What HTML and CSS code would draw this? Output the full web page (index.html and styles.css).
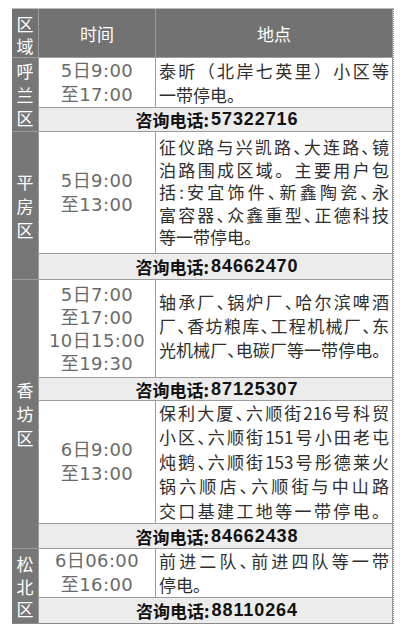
FILE: index.html
```
<!DOCTYPE html>
<html lang="zh">
<head>
<meta charset="utf-8">
<link rel="stylesheet" href="styles.css">
</head>
<body>
<div class="tbl">
  <div class="hd reg"><span>区</span><span>域</span></div>
  <div class="hd">时间</div>
  <div class="hd">地点</div>

  <div class="reg r1"><span>呼</span><span>兰</span><span>区</span></div>
  <div class="tm"><div>5日9:00</div><div>至17:00</div></div>
  <div class="loc lh24">
    <div class="j">泰昕（北岸七英里）小区等</div>
    <div>一带停电。</div>
  </div>
  <div class="ph">咨询电话:<span class="num">57322716</span></div>

  <div class="reg r2"><span>平</span><span>房</span><span>区</span></div>
  <div class="tm"><div>5日9:00</div><div>至13:00</div></div>
  <div class="loc lh22">
    <div class="j">征仪路与兴凯路<span class="d">、</span>大连路<span class="d">、</span>镜</div>
    <div class="j">泊路围成区域。主要用户包</div>
    <div class="j">括:安宜饰件<span class="d">、</span>新鑫陶瓷<span class="d">、</span>永</div>
    <div class="j">富容器<span class="d">、</span>众鑫重型<span class="d">、</span>正德科技</div>
    <div>等一带停电。</div>
  </div>
  <div class="ph">咨询电话:<span class="num">84662470</span></div>

  <div class="reg r3"><span>香</span><span>坊</span><span>区</span></div>
  <div class="tm lh23"><div>5日7:00</div><div>至17:00</div><div>10日15:00</div><div>至19:30</div></div>
  <div class="loc lh24 up">
    <div class="j">轴承厂<span class="d">、</span>锅炉厂<span class="d">、</span>哈尔滨啤酒</div>
    <div class="j">厂<span class="d">、</span>香坊粮库<span class="d">、</span>工程机械厂<span class="d">、</span>东</div>
    <div class="j tight">光机械厂<span class="d">、</span>电碳厂等一带停电。</div>
  </div>
  <div class="ph">咨询电话:<span class="num">87125307</span></div>
  <div class="tm"><div>6日9:00</div><div>至13:00</div></div>
  <div class="loc lh245">
    <div class="j">保利大厦<span class="d">、</span>六顺街216号科贸</div>
    <div class="j">小区<span class="d">、</span>六顺街151号小田老屯</div>
    <div class="j">炖鹅<span class="d">、</span>六顺街153号彤德莱火</div>
    <div class="j">锅六顺店<span class="d">、</span>六顺街与中山路</div>
    <div class="j">交口基建工地等一带停电。</div>
  </div>
  <div class="ph">咨询电话:<span class="num">84662438</span></div>

  <div class="reg r4"><span>松</span><span>北</span><span>区</span></div>
  <div class="tm"><div>6日06:00</div><div>至16:00</div></div>
  <div class="loc lh245">
    <div class="j">前进二队<span class="d">、</span>前进四队等一带</div>
    <div>停电。</div>
  </div>
  <div class="ph">咨询电话:<span class="num">88110264</span></div>
</div>
</body>
</html>
```

FILE: styles.css
```
html, body {
  margin: 0;
  padding: 0;
  background: #ffffff;
}

body {
  font-family: "Noto Sans CJK SC", sans-serif;
}

.tbl {
  margin: 8px 0 0 12px;
  width: 381px;
  display: grid;
  grid-template-columns: 26px 116px 236px;
  grid-template-rows: 48px 49px 23px 121px 25px 97px 22px 122px 24px 48px 25px;
  gap: 1px;
  background: #9c9c9c;
  background-clip: padding-box;
  border-top: 1px solid #bdbdbd;
  border-bottom: 1px solid #8a8a8a;
  border-right: 1px dotted #8c8c8c;
}

.hd {
  background: #727272;
  color: #ffffff;
  font-size: 17px;
  display: flex;
  align-items: center;
  justify-content: center;
}

.reg {
  background: #777777;
  color: #ffffff;
  font-size: 17px;
  line-height: 23.5px;
  display: flex;
  flex-direction: column;
  align-items: center;
  justify-content: center;
}

.hd.reg {
  background: #727272;
  line-height: 22px;
  font-size: 17px;
  padding-top: 3px;
}

.r1 { grid-row: 2 / span 2; }
.r2 { grid-row: 4 / span 2; line-height: 24px; }
.r3 { grid-row: 6 / span 4; line-height: 24px; }
.r4 { grid-row: 10 / span 2; line-height: 22.5px; padding-top: 2px; }

.tm {
  grid-column: 2;
  background: #ffffff;
  color: #6a6a6a;
  font-family: "DejaVu Sans", "Noto Sans CJK SC", sans-serif;
  font-size: 18px;
  letter-spacing: 0.4px;
  line-height: 24px;
  display: flex;
  flex-direction: column;
  align-items: center;
  justify-content: center;
}

.tm.lh23 { line-height: 23px; }

.loc {
  grid-column: 3;
  background: #ffffff;
  color: #2e2e2e;
  font-size: 17px;
  padding: 0 3px 0 3px;
  display: flex;
  flex-direction: column;
  justify-content: center;
}

.lh22 { line-height: 22.5px; }
.lh24 { line-height: 24px; }
.lh245 { line-height: 24.5px; }
.loc.up { padding-bottom: 5px; }

.j {
  text-align: justify;
  text-align-last: justify;
  white-space: nowrap;
}

.tight {
  letter-spacing: -0.3px;
}

.d {
  font-feature-settings: "halt" 1;
}

.ph {
  grid-column: 2 / span 2;
  background: #ececec;
  color: #111111;
  font-size: 17px;
  font-weight: 700;
  display: flex;
  align-items: center;
  justify-content: center;
  padding-left: 3px;
}

.num {
  font-family: "Liberation Sans", sans-serif;
  font-size: 18px;
  letter-spacing: 0.9px;
  padding-left: 2px;
}
```
